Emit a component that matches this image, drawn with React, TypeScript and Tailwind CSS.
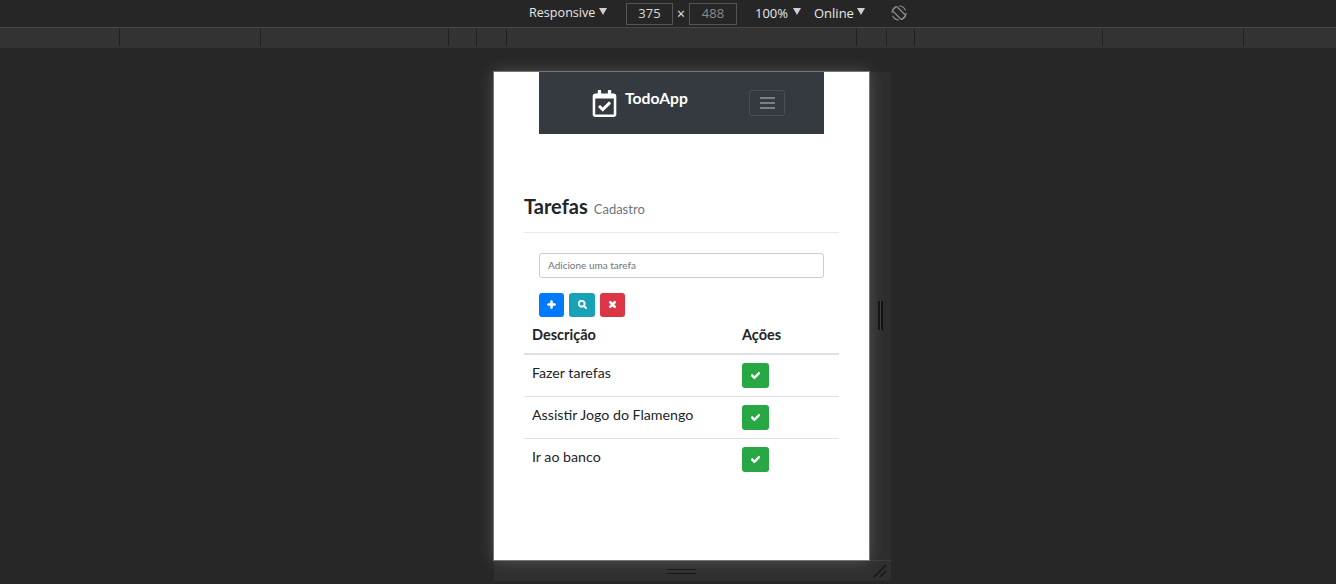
import { FaCheck, FaPlus, FaRegCalendarCheck, FaSearch, FaTimes } from "react-icons/fa";

const rulerWidths = [120, 141, 188, 28, 30, 350, 30, 28, 188, 141];
const tasks = ["Fazer tarefas", "Assistir Jogo do Flamengo", "Ir ao banco"];

const Caret = () => (
  <span className="inline-block w-0 h-0 border-x-[4px] border-x-transparent border-t-[7px] border-t-[#cfcfcf] mb-[5px]" />
);

const DevToolsBar = () => (
  <div className="h-[28px] bg-[#262626] border-b border-[#474747] flex items-center pl-[529px] text-[13px] text-[#e6e6e6] font-['Open_Sans',sans-serif]">
    <span className="w-[70px] text-[12.6px]">Responsive</span>
    <Caret />
    <div className="ml-[19px] w-[47px] h-[22px] border border-[#555] flex items-center justify-center text-[#d8d8d8]">375</div>
    <span className="w-[16px] text-center text-[14px]">×</span>
    <div className="w-[48px] h-[22px] border border-[#555] flex items-center justify-center text-[#8a8a8a]">488</div>
    <span className="ml-[18px] w-[38px]">100%</span>
    <Caret />
    <span className="ml-[13px] w-[43px]">Online</span>
    <Caret />
    <svg className="ml-[26px] mb-[2px]" width="16" height="16" viewBox="0 0 16 16" fill="none" stroke="#8a8a8a" strokeWidth="1.2">
      <circle cx="8" cy="8" r="7" strokeDasharray="8 3" />
      <rect x="5" y="1.5" width="6" height="13" rx="1" transform="rotate(-45 8 8)" />
    </svg>
  </div>
);

const Ruler = () => (
  <div className="h-[20px] bg-[#333333] flex">
    {rulerWidths.map((width, i) => (
      <div key={i} className="h-[18px] border-r border-[#222222]" style={{ width }} />
    ))}
  </div>
);

const TaskPage = () => (
  <div className="relative w-[375px] h-[488px] bg-white shrink-0 font-['Lato',sans-serif] shadow-[0_0_16px_rgba(255,255,255,0.2)] outline outline-[#777777]">
    <nav className="ml-[45px] w-[285px] h-[62px] bg-[#343a40] flex items-start pt-[18px] pl-[53px]">
      <FaRegCalendarCheck className="text-white w-[25px] h-[27px]" />
      <span className="ml-[8px] mt-[-3px] w-[62px] text-[15.7px] font-bold text-white leading-[22px]">TodoApp</span>
      <div className="ml-[62px] w-[36px] h-[26px] border border-[#4b5056] rounded-[3px] flex flex-col items-center justify-center gap-[3px]">
        <span className="w-[15px] h-[2px] bg-[#7b7f83]" />
        <span className="w-[15px] h-[2px] bg-[#7b7f83]" />
        <span className="w-[15px] h-[2px] bg-[#7b7f83]" />
      </div>
    </nav>

    <div className="mx-[30px] mt-[60px] h-[39px] border-b border-[#e9e9e9] flex items-baseline">
      <h1 className="text-[20px] font-bold text-[#212529] leading-[25px]">Tarefas</h1>
      <small className="ml-[6px] text-[13px] text-[#6c757d]">Cadastro</small>
    </div>

    <div className="mx-[45px] mt-[18px]">
      <input
        className="w-[285px] h-[25px] border border-[#cccccc] rounded-[3px] px-[8px] text-[10px] text-[#495057] placeholder:text-[#6c757d] outline-none"
        placeholder="Adicione uma tarefa"
      />
      <div className="mt-[15px] flex gap-[5px]">
        <button type="button" className="w-[25px] h-[24px] rounded-[3px] bg-[#007bff] text-white flex items-center justify-center">
          <FaPlus className="text-[9px]" stroke="currentColor" strokeWidth={50} />
        </button>
        <button type="button" className="w-[26px] h-[24px] rounded-[3px] bg-[#17a2b8] text-white flex items-center justify-center">
          <FaSearch className="text-[9px]" stroke="currentColor" strokeWidth={40} />
        </button>
        <button type="button" className="w-[25px] h-[24px] rounded-[3px] bg-[#dc3545] text-white flex items-center justify-center">
          <FaTimes className="text-[9px]" stroke="currentColor" strokeWidth={60} />
        </button>
      </div>
    </div>

    <table className="ml-[30px] w-[315px] text-[14.5px] text-[#212529]">
      <thead>
        <tr className="h-[37px] border-b-2 border-[#dee2e6] text-left">
          <th className="pl-[8px] w-[210px] font-bold">Descrição</th>
          <th className="pl-[8px] font-bold">Ações</th>
        </tr>
      </thead>
      <tbody>
        {tasks.map((task, i) => (
          <tr key={task} className={i === 0 ? "h-[43px] border-b border-[#dee2e6]" : i === 1 ? "h-[42px] border-b border-[#dee2e6]" : "h-[42px]"}>
            <td className="pl-[8px] align-top pt-[8px] text-[14.2px] leading-[20px]">{task}</td>
            <td className="pl-[8px] align-top pt-[8px]">
              <button type="button" className="w-[27px] h-[25px] rounded-[3px] bg-[#28a745] text-white flex items-center justify-center">
                <FaCheck className="text-[9px]" stroke="currentColor" strokeWidth={50} />
              </button>
            </td>
          </tr>
        ))}
      </tbody>
    </table>
  </div>
);

const App = () => (
  <div className="w-[1336px] h-[584px] bg-[#272727] overflow-hidden flex flex-col">
    <DevToolsBar />
    <Ruler />
    <div className="mt-[24px] pl-[494px]">
      <div className="flex">
        <TaskPage />
        <div className="w-[22px] h-[488px] bg-[#2d2d2d] flex items-center justify-center">
          <div className="w-[5px] h-[29px] border-x-2 border-[#111111] bg-[#3a3a3a] mt-[-2px]" />
        </div>
      </div>
      <div className="w-[397px] h-[21px] bg-[#2f2f2f] border-t border-[#3c3c3c] flex items-center">
        <div className="ml-[173px] w-[29px] h-[5px] border-y border-[#151515]" />
        <svg className="ml-[177px]" width="14" height="14" viewBox="0 0 14 14" stroke="#151515" strokeWidth="1.5">
          <path d="M1 13 L13 1 M7 13 L13 7" />
        </svg>
      </div>
    </div>
  </div>
);

export default App;
